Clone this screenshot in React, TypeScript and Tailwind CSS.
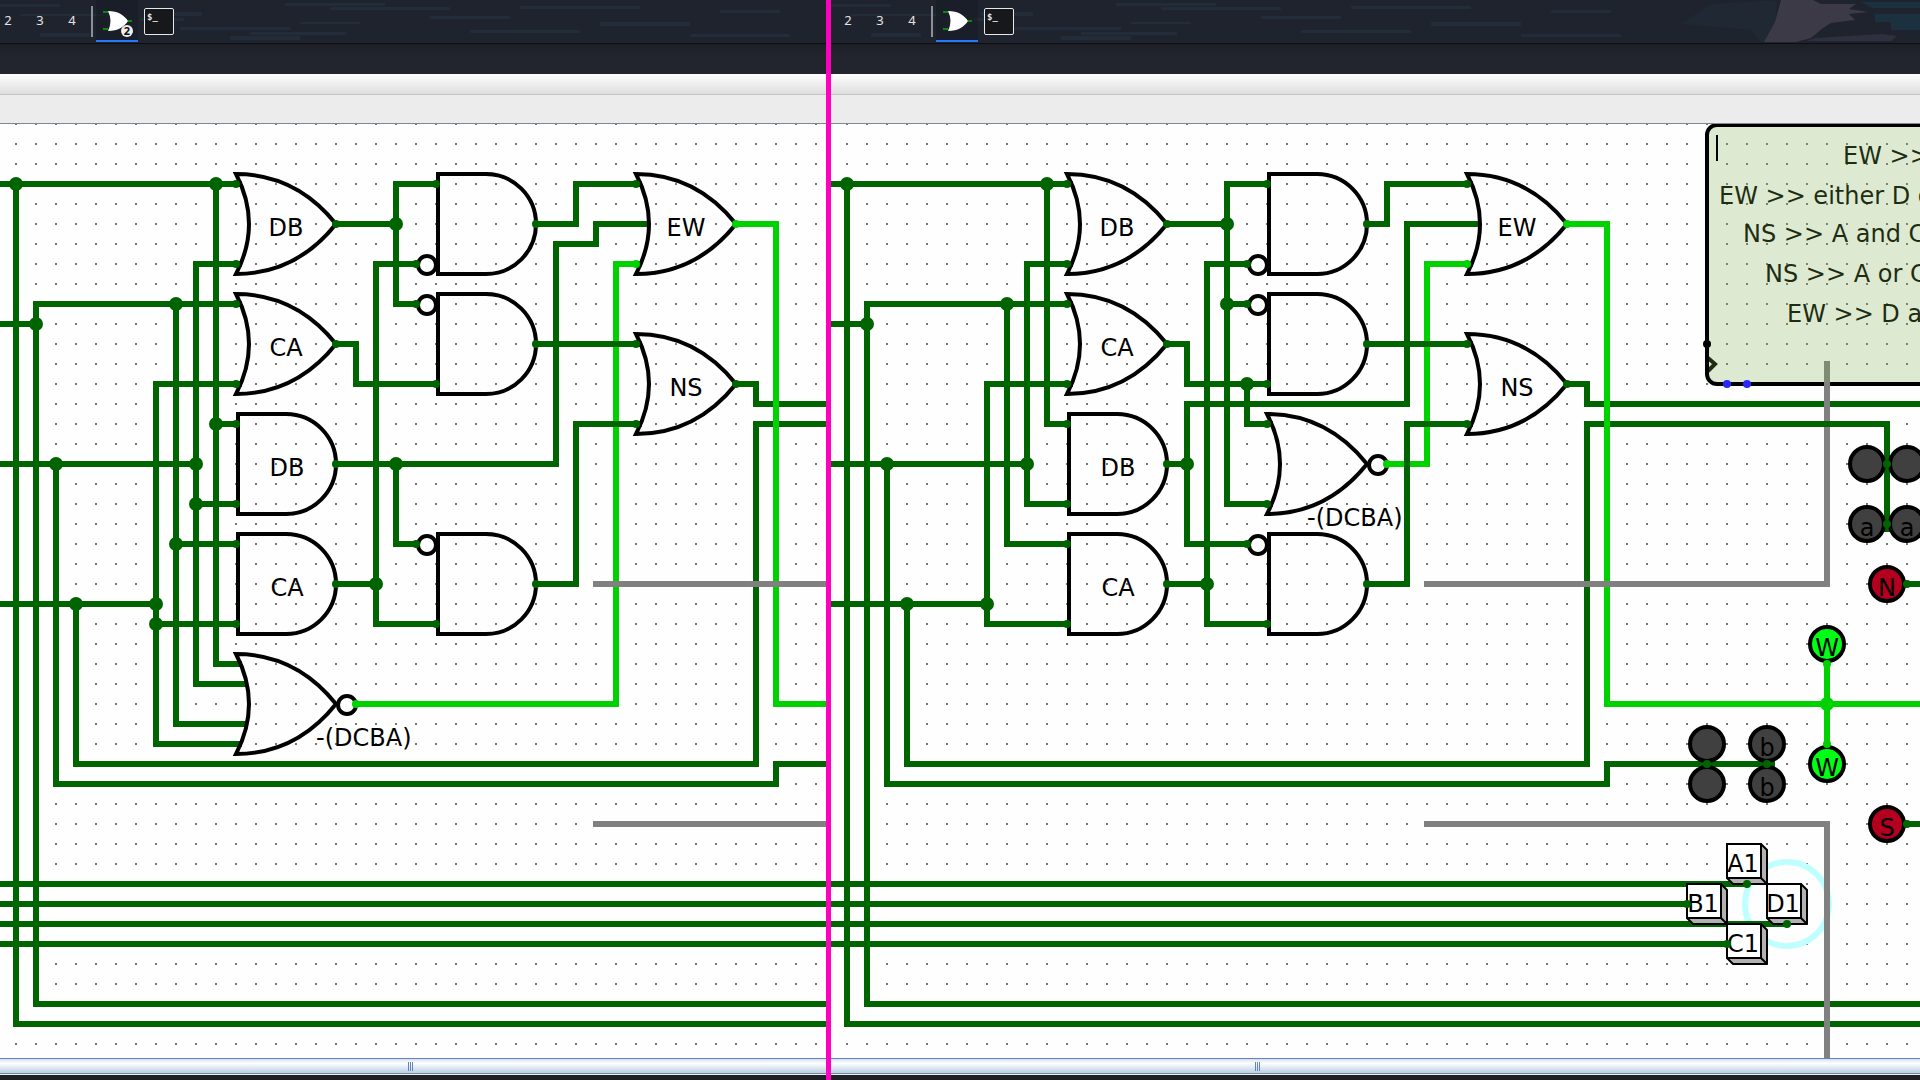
import type { ReactNode } from 'react';

const LOW = '#006400';
const HIGH = '#00d200';
const EDGE = '#808080';

type Point = [number, number];

interface GateProps {
  x: number;
  y: number;
  label?: string;
}

interface LedProps {
  x: number;
  y: number;
  fill: string;
  label?: string;
}

// Gates are placed by their output pin, as in the circuit file
function AndGate({ x, y, label }: GateProps) {
  return (
    <g>
      <path
        d={`M${x - 98} ${y - 50} H${x - 50} A50 50 0 0 1 ${x - 50} ${y + 50} H${x - 98} Z`}
        fill="none"
        stroke="#000"
        strokeWidth="4"
      />
      {label && <text x={x - 49} y={y + 12} textAnchor="middle">{label}</text>}
    </g>
  );
}

function OrGate({ x, y, label }: GateProps) {
  return (
    <g>
      <path
        d={`M${x} ${y} Q${x - 40} ${y - 50} ${x - 100} ${y - 50} Q${x - 74} ${y} ${x - 100} ${y + 50} Q${x - 40} ${y + 50} ${x} ${y} Z`}
        fill="none"
        stroke="#000"
        strokeWidth="4"
      />
      {label && <text x={x - 50} y={y + 12} textAnchor="middle">{label}</text>}
    </g>
  );
}

function Bubbles({ at }: { at: Point[] }) {
  return (
    <>
      {at.map(([x, y]) => (
        <circle key={`${x}-${y}`} cx={x} cy={y} r="9" fill="#fff" stroke="#000" strokeWidth="4" />
      ))}
    </>
  );
}

function Wire({ d, color = LOW }: { d: string; color?: string }) {
  return <path d={d} fill="none" stroke={color} strokeWidth="6" />;
}

function Dots({ at, r = 7, color = LOW }: { at: Point[]; r?: number; color?: string }) {
  return (
    <>
      {at.map(([x, y]) => (
        <circle key={`${x}-${y}`} cx={x} cy={y} r={r} fill={color} />
      ))}
    </>
  );
}

function Led({ x, y, fill, label }: LedProps) {
  return (
    <g>
      <circle cx={x} cy={y} r="17" fill={fill} stroke="#000" strokeWidth="4" />
      {label && <text x={x} y={y + 12} textAnchor="middle">{label}</text>}
    </g>
  );
}

function PushButton({ x, y, label }: { x: number; y: number; label: string }) {
  return (
    <g stroke="#000" strokeWidth="2" strokeLinejoin="round">
      <path d={`M${x} ${y} h34 l6 6 v34 h-34 l-6 -6 Z`} fill="#b2b2b2" />
      <rect x={x} y={y} width="34" height="34" fill="#fff" />
      <path d={`M${x + 34} ${y + 34} l6 6`} fill="none" />
      <text x={x + 16} y={y + 28} textAnchor="middle" stroke="none">{label}</text>
    </g>
  );
}

function Canvas({ id, children }: { id: string; children: ReactNode }) {
  return (
    <svg
      className="block min-h-0 w-full flex-1 bg-[#fefefe] font-['DejaVu_Sans',sans-serif] text-2xl"
      role="img"
      aria-label="Circuit canvas"
    >
      <defs>
        <pattern id={id} width="20" height="20" patternUnits="userSpaceOnUse">
          <rect x="15" y="3" width="2" height="2" fill="#777" />
        </pattern>
      </defs>
      <g transform="translate(0 -124)">
        <rect y="124" width="100%" height="100%" fill={`url(#${id})`} />
        {children}
      </g>
    </svg>
  );
}

const pinsLeft: Point[] = [
  [236, 184], [236, 264], [236, 304], [236, 384], [236, 424], [236, 504], [236, 544], [236, 624],
  [336, 224], [336, 344], [336, 464], [336, 584],
  [436, 184], [416, 264], [416, 304], [436, 384], [416, 544], [436, 624],
  [536, 224], [536, 344], [536, 584],
  [636, 184], [636, 344], [636, 424], [736, 384],
];

function LeftCircuit() {
  return (
    <Canvas id="grid-left">
      <Wire color={HIGH} d="M356 704 H616 V264 H642" />
      {/* Sensor inputs */}
      <Wire d="M0 184 H242 M16 184 V1024 H2000" />
      <Wire d="M0 324 H36 M242 304 H36 V1004 H2000" />
      <Wire d="M0 464 H196 M56 464 V784 H776 V764 H2000" />
      <Wire d="M0 604 H156 M76 604 V764 H756 V424 H2000" />
      <Wire d="M216 184 V664 H242 M216 424 H236" />
      <Wire d="M242 264 H196 V684 H247 M196 504 H236" />
      <Wire d="M176 304 V724 H247 M176 544 H236" />
      <Wire d="M242 384 H156 V744 H242 M156 624 H236" />
      {/* Between the gate columns */}
      <Wire d="M336 224 H396 M436 184 H396 V304 H416" />
      <Wire d="M416 264 H376 V624 H436 M336 584 H376" />
      <Wire d="M336 344 H356 V384 H436" />
      <Wire d="M336 464 H556 V244 H596 V224 H648 M396 464 V544 H416" />
      <Wire d="M536 224 H576 V184 H642 M536 344 H642 M536 584 H576 V424 H642" />
      <Wire d="M736 384 H756 V404 H2000" />
      <Wire d="M0 884 H2000 M0 904 H2000 M0 924 H2000 M0 944 H2000" />
      <Wire color={HIGH} d="M736 224 H776 V704 H2000" />
      <Wire color={EDGE} d="M593 584 H2000 M593 824 H2000" />
      <Dots
        at={[
          [16, 184], [216, 184], [176, 304], [36, 324], [216, 424], [56, 464], [196, 464], [196, 504],
          [176, 544], [76, 604], [156, 604], [156, 624], [396, 224], [396, 464], [376, 584],
        ]}
      />

      <OrGate x={336} y={224} label="DB" />
      <OrGate x={336} y={344} label="CA" />
      <AndGate x={336} y={464} label="DB" />
      <AndGate x={336} y={584} label="CA" />
      <OrGate x={336} y={704} />
      <text x="316" y="746">-(DCBA)</text>
      <AndGate x={536} y={224} />
      <AndGate x={536} y={344} />
      <AndGate x={536} y={584} />
      <OrGate x={736} y={224} label="EW" />
      <OrGate x={736} y={384} label="NS" />
      <Bubbles at={[[427, 265], [427, 305], [427, 545], [347, 705]]} />
      <Dots r={4} at={pinsLeft} />
      <Dots r={4} color={HIGH} at={[[356, 704], [636, 264], [736, 224]]} />
    </Canvas>
  );
}

const pinsRight: Point[] = [
  ...pinsLeft,
  [436, 424], [436, 504],
];

function RightCircuit() {
  return (
    <Canvas id="grid-right">
      <circle cx="956" cy="904" r="42" fill="none" stroke="#bfffff" strokeWidth="6" />
      <Wire color={HIGH} d="M556 464 H596 V264 H642" />
      <Wire d="M0 184 H242 M16 184 V1024 H2000" />
      <Wire d="M0 324 H36 M242 304 H36 V1004 H2000" />
      <Wire d="M0 464 H196 M56 464 V784 H776 V764 H944" />
      <Wire d="M0 604 H156 M76 604 V764 H756 V424" />
      <Wire d="M216 184 V424 H236" />
      <Wire d="M242 264 H196 V504 H236" />
      <Wire d="M176 304 V544 H236" />
      <Wire d="M242 384 H156 V624 H236" />
      <Wire d="M336 224 H396 M436 184 H396 V504 H442 M396 304 H416" />
      <Wire d="M416 264 H376 V624 H436 M336 584 H376" />
      <Wire d="M336 344 H356 V384 H436 M416 384 V424 H442" />
      <Wire d="M336 464 H356 M648 224 H576 V404 H356 V544 H416" />
      <Wire d="M536 224 H556 V184 H642 M536 344 H642 M536 584 H576 V424 H642" />
      <Wire d="M736 384 H756 V404 H2000" />
      <Wire d="M0 884 H916 M0 904 H856 M0 924 H956 M0 944 H896" />
      <Wire d="M1076 584 H2000 M1076 824 H2000" />
      <Wire color={HIGH} d="M736 224 H776 V427" />
      {/* Road edges */}
      <Wire color={EDGE} d="M996 361 V584 M996 821 V2000" />
      <Wire d="M753 424 H1056 V532" />
      <Wire color={HIGH} d="M776 400 V704 H2000 M996 664 V744" />
      <Wire color={EDGE} d="M593 584 H999 M593 824 H999" />
      <Dots
        at={[
          [16, 184], [216, 184], [176, 304], [36, 324], [56, 464], [196, 464], [76, 604], [156, 604],
          [396, 224], [396, 304], [416, 384], [356, 464], [376, 584],
        ]}
      />
      <Dots color={HIGH} at={[[996, 704]]} />

      <OrGate x={336} y={224} label="DB" />
      <OrGate x={336} y={344} label="CA" />
      <AndGate x={336} y={464} label="DB" />
      <AndGate x={336} y={584} label="CA" />
      <AndGate x={536} y={224} />
      <AndGate x={536} y={344} />
      <OrGate x={536} y={464} />
      <text x="476" y="526">-(DCBA)</text>
      <AndGate x={536} y={584} />
      <OrGate x={736} y={224} label="EW" />
      <OrGate x={736} y={384} label="NS" />
      <Bubbles at={[[427, 265], [427, 305], [427, 545], [547, 465]]} />

      {/* Traffic lights */}
      <Led x={1036} y={464} fill="#404040" />
      <Led x={1076} y={464} fill="#404040" />
      <Led x={1036} y={524} fill="#404040" label="a" />
      <Led x={1076} y={524} fill="#404040" label="a" />
      <Led x={1056} y={584} fill="#b4001e" label="N" />
      <Led x={1056} y={824} fill="#b4001e" label="S" />
      <Led x={996} y={644} fill="#00ff14" label="W" />
      <Led x={996} y={764} fill="#00ff14" label="W" />
      <Led x={876} y={744} fill="#404040" />
      <Led x={876} y={784} fill="#404040" />
      <Led x={936} y={744} fill="#404040" label="b" />
      <Led x={936} y={784} fill="#404040" label="b" />

      <PushButton x={896} y={844} label="A1" />
      <PushButton x={856} y={884} label="B1" />
      <PushButton x={936} y={884} label="D1" />
      <PushButton x={896} y={924} label="C1" />

      <Dots r={4} at={pinsRight} />
      <Dots
        r={4}
        at={[
          [1056, 464], [1056, 524], [1076, 584], [1076, 824], [876, 764], [936, 764],
          [916, 884], [856, 904], [956, 924], [896, 944],
        ]}
      />
      <Dots r={4} color={HIGH} at={[[556, 464], [636, 264], [736, 224], [996, 664], [996, 744]]} />

      {/* Rules terminal: tinted glass over its own text and the grid */}
      <text x="1012" y="164">EW &gt;&gt;</text>
      <text x="888" y="204">EW &gt;&gt; either D o</text>
      <text x="912" y="242">NS &gt;&gt; A and C</text>
      <text x="934" y="282">NS &gt;&gt; A or C</text>
      <text x="956" y="322">EW &gt;&gt; D a</text>
      <path d="M877 358 L884 364 L877 371" fill="none" stroke="#000" strokeWidth="4" />
      <rect x="876" y="124" width="520" height="260" rx="10" fill="#7cae4c" fillOpacity="0.25" />
      <rect x="876" y="125" width="520" height="259" rx="10" fill="none" stroke="#000" strokeWidth="4" />
      <Wire color={EDGE} d="M996 382 V400" />
      <path d="M886 135 V161" stroke="#000" strokeWidth="2" />
      <Dots r={4} color="#000" at={[[876, 344]]} />
      <Dots r={4} color="#2828ff" at={[[896, 384], [916, 384]]} />
    </Canvas>
  );
}

const streaks = [
  [0, 4, 60, 3], [20, 14, 90, 2], [150, 12, 52, 4], [140, 18, 44, 3], [180, 27, 110, 3], [250, 32, 96, 3],
  [230, 36, 70, 4], [40, 33, 50, 4], [285, 3, 100, 3], [330, 7, 120, 3], [300, 22, 60, 2], [430, 16, 80, 3],
  [470, 30, 110, 3], [520, 6, 120, 3], [600, 22, 90, 4], [690, 34, 100, 3], [720, 10, 60, 3],
];

function Wallpaper({ clouds }: { clouds?: boolean }) {
  return (
    <svg className="absolute inset-0 h-full w-full" aria-hidden="true">
      {streaks.map(([x, y, w, h]) => (
        <rect key={`${x}-${y}`} x={x} y={y} width={w} height={h} rx="1" fill="#283746" fillOpacity="0.5" />
      ))}
      {clouds && (
        <>
          <path d="M880 4 L945 0 V42 H930 L920 30 L850 24 Z" fill="#24303b" fillOpacity="0.4" />
          <path
            d="M950 0 H982 L990 4 H1025 L1018 9 L1038 12 L1018 14 L1024 20 L1000 23 L992 28 L980 38 L965 42 H933 L944 22 Z"
            fill="#3b3a46"
          />
          <path d="M1030 2 H1100 V8 H1042 Z M1044 14 H1100 V30 H1060 V22 H1044 Z" fill="#1b3445" fillOpacity="0.8" />
          <path d="M985 38 L1050 34 L1066 36 L1060 41 H975 Z" fill="#39394a" fillOpacity="0.6" />
        </>
      )}
    </svg>
  );
}

function CircuitIcon({ count }: { count?: number }) {
  return (
    <svg width="42" height="40" viewBox="0 0 42 40" aria-hidden="true">
      <path d="M7 12 H12 M7 29 H12 M32 21 H36" stroke="#0a8a0a" strokeWidth="2" />
      <path d="M12 11 C22 11 28 15 32 21 C28 27 22 31 12 31 Q17 21 12 11 Z" fill="#fff" />
      {count && (
        <>
          <circle cx="31" cy="31" r="6" fill="#eee" />
          <text x="31" y="35" textAnchor="middle" fill="#111" className="font-['Noto_Sans',sans-serif] text-[11px] font-bold">
            {count}
          </text>
        </>
      )}
    </svg>
  );
}

interface TaskbarProps {
  className: string;
  count?: number;
  clouds?: boolean;
}

function Taskbar({ className, count, clouds }: TaskbarProps) {
  return (
    <div className="relative h-11 shrink-0 overflow-hidden border-b border-[#0c0e12] bg-[#1e232d]">
      <Wallpaper clouds={clouds} />
      <div className={`relative flex h-[42px] items-center ${className}`}>
        {['2', '3', '4'].map((n) => (
          <button key={n} className="w-8 shrink-0 text-center font-['Noto_Sans',sans-serif] text-[13px] text-[#e4e4e4]">
            {n}
          </button>
        ))}
        <span className="ml-[3px] h-[31px] w-0.5 shrink-0 bg-[#8d9096]" />
        <button aria-label="Logisim" className="ml-[3px] h-[42px] shrink-0 border-b-2 border-[#2777ff] bg-[#151b24]/60">
          <CircuitIcon count={count} />
        </button>
        <button
          aria-label="Terminal"
          className="ml-1.5 flex h-[27px] w-[30px] shrink-0 items-start rounded-xs border border-[#e8e8e8] bg-[#16181b] px-0.5 pt-0.5 font-['DejaVu_Sans_Mono',monospace] text-[9px] leading-3 font-bold text-[#e4e4e4]"
        >
          $_
        </button>
      </div>
    </div>
  );
}

function ScrollBar({ className }: { className: string }) {
  return (
    <div className="shrink-0 border-b-[5px] border-[#1e2029]">
      <div
        className={`flex h-4 items-center gap-px border-t border-b border-t-[#6382bf] border-b-[#7a8a99] bg-linear-to-b from-[#d3e1ef] via-white via-30% to-[#b8cfe5] ${className}`}
      >
        <span className="h-[9px] w-px bg-[#6382bf]" />
        <span className="h-[9px] w-px bg-[#6382bf]" />
        <span className="h-[9px] w-px bg-[#6382bf]" />
      </div>
      <div className="h-px bg-[#eee]" />
    </div>
  );
}

function Chrome() {
  return (
    <>
      <div className="h-[30px] shrink-0 bg-linear-to-b from-[#1c1f26] to-[#22252e] to-40%" />
      <div className="h-[21px] shrink-0 border-b border-[#c4c4c4] bg-linear-to-b from-white to-[#dedede]" />
      <div className="h-[29px] shrink-0 border-b border-[#7a8a99] bg-[#ececec]" />
    </>
  );
}

export default function App() {
  return (
    <main className="grid h-screen grid-cols-[826fr_5px_1089fr] overflow-hidden">
      <section className="flex min-h-0 min-w-0 flex-col overflow-hidden">
        <Taskbar className="-ml-2" count={2} />
        <Chrome />
        <LeftCircuit />
        <ScrollBar className="pl-[408px]" />
      </section>
      <div className="bg-[#ff00be]" />
      <section className="flex min-h-0 min-w-0 flex-col overflow-hidden">
        <Taskbar className="ml-px" clouds />
        <Chrome />
        <RightCircuit />
        <ScrollBar className="pl-[424px]" />
      </section>
    </main>
  );
}
